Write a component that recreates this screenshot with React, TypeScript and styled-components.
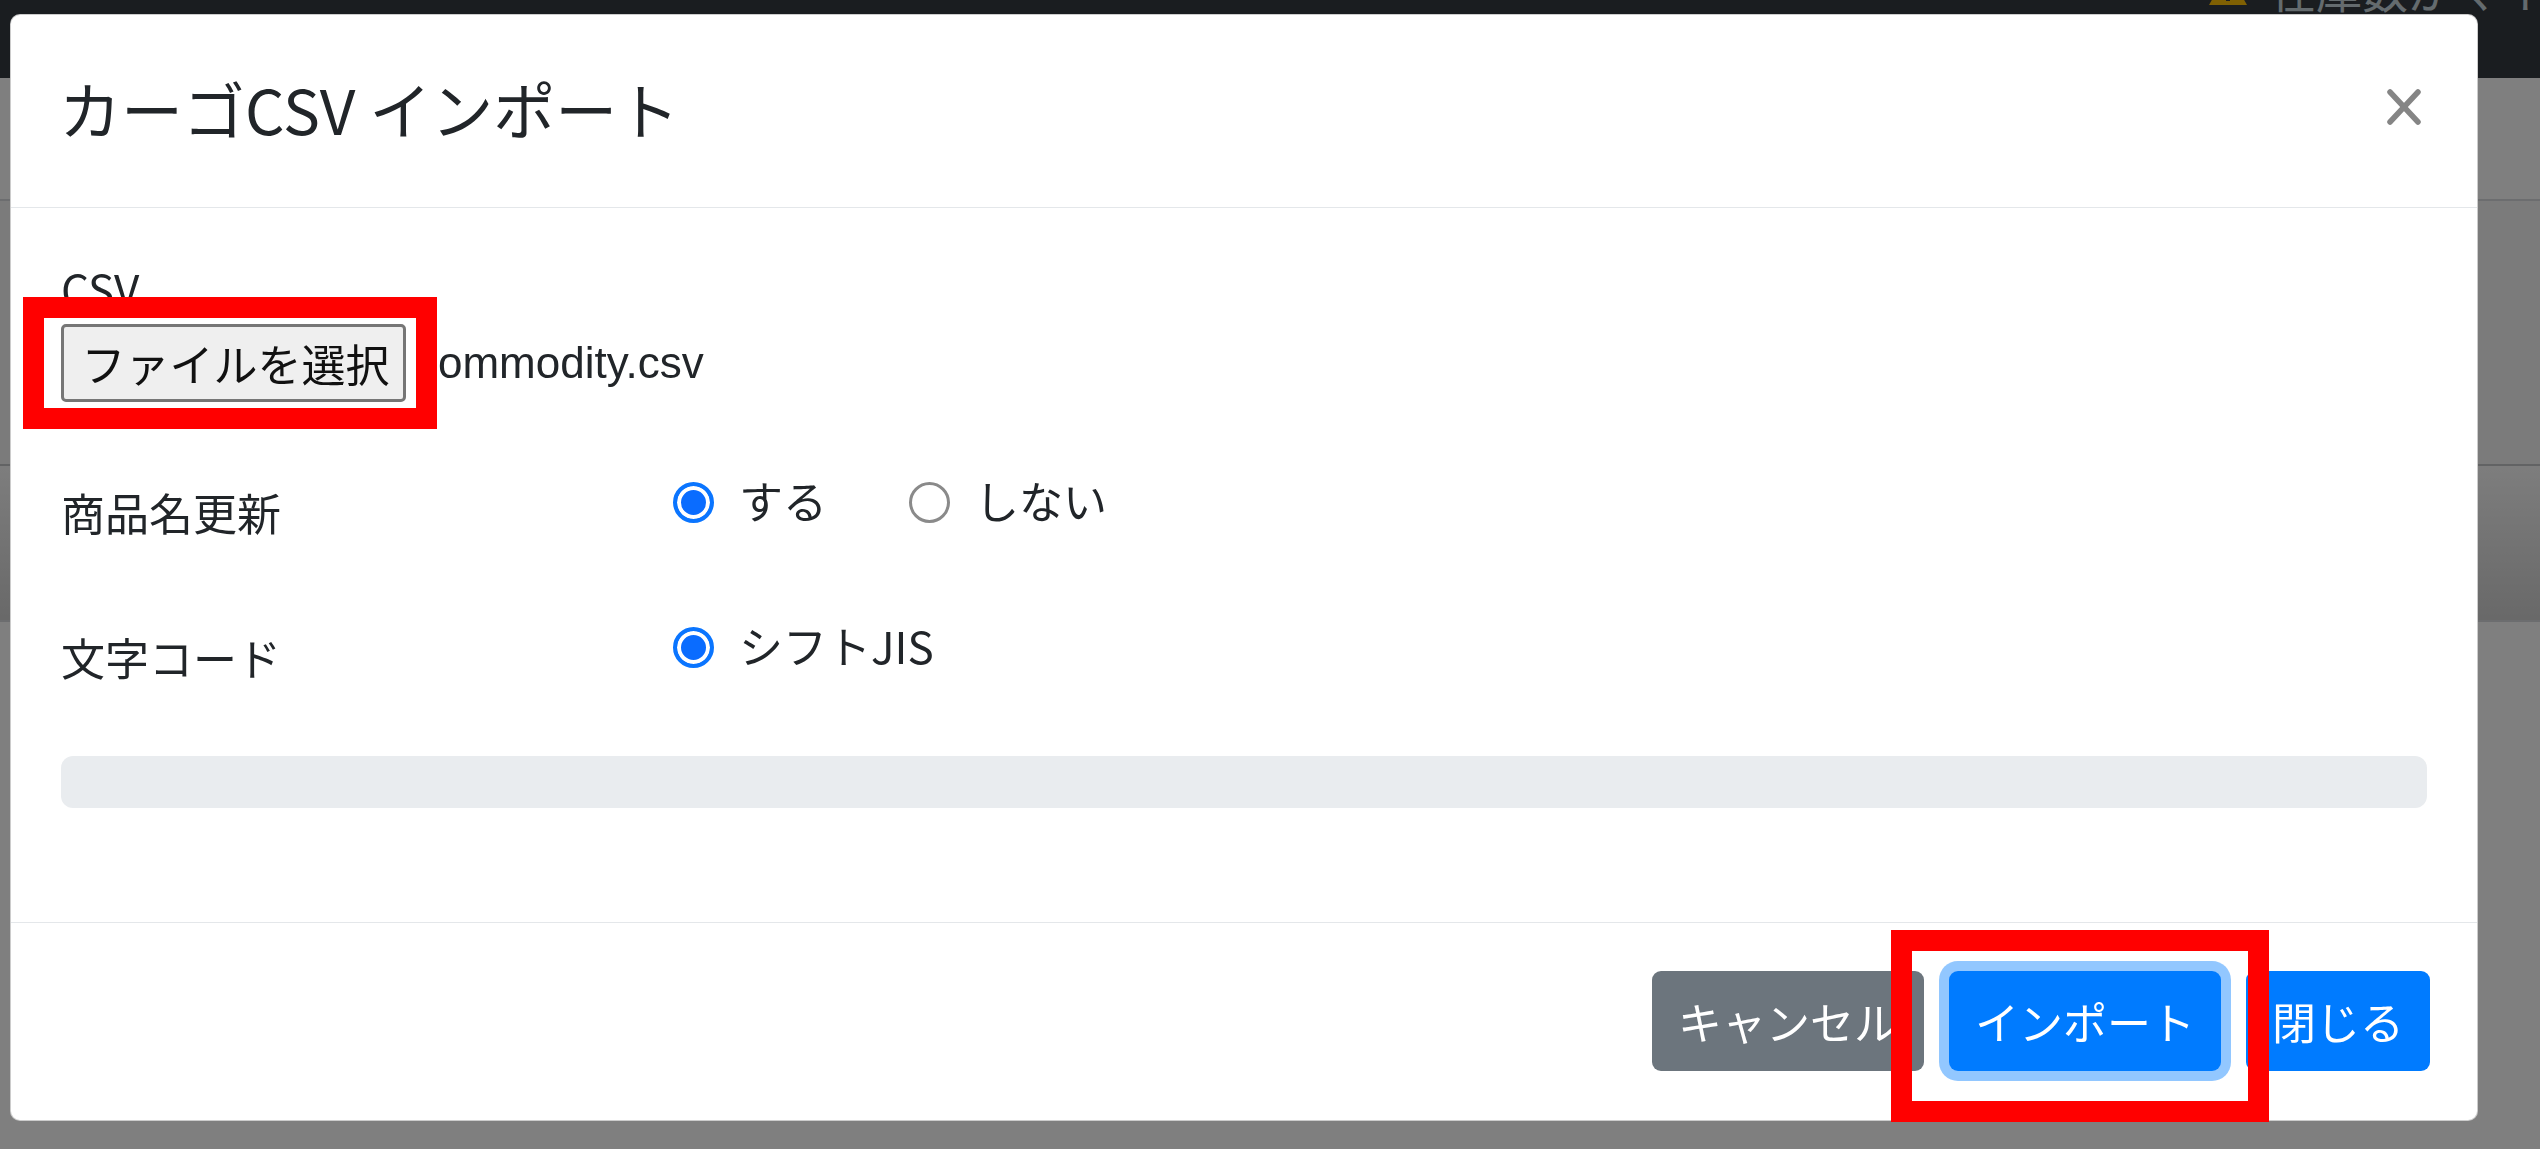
import React from "react";
import styled, { createGlobalStyle } from "styled-components";

const GlobalStyle = createGlobalStyle`
    * {
        box-sizing: border-box;
    }
    body {
        margin: 0;
        overflow: hidden;
        font-family: "Noto Sans CJK JP", "Noto Sans", sans-serif;
        color: #212529;
    }
`;

const Page = styled.div`
    height: 1149px;
    background: #fff;
    overflow: hidden;
`;

const Navbar = styled.div`
    height: 78px;
    background: #343a40;
    display: flex;
    align-items: flex-start;
    padding-left: 2208px;
    overflow: hidden;
    white-space: nowrap;
`;

const NavWarning = styled.div`
    display: flex;
    align-items: center;
    gap: 22px;
    margin-top: -37px;
    height: 50px;
    color: #c9d6dc;
    font-size: 46px;
    line-height: 50px;
`;

const Band = styled.div<{ $height: number; $bg: string; $line?: string }>`
    height: ${(p) => p.$height}px;
    background: ${(p) => p.$bg};
    border-top: ${(p) => (p.$line ? `2px solid ${p.$line}` : "none")};
`;

const Backdrop = styled.div`
    position: fixed;
    inset: 0;
    background: rgba(0, 0, 0, 0.5);
`;

const ModalLayer = styled.div`
    position: fixed;
    inset: 0;
    padding: 14px 0 0 10px;
`;

const Modal = styled.div`
    position: relative;
    width: 2468px;
    background: #fff;
    border: 1px solid rgba(0, 0, 0, 0.2);
    border-radius: 10px;
`;

const Header = styled.div`
    display: flex;
    align-items: center;
    padding: 47px 56px 52px 48px;
    border-bottom: 1px solid #e4e7ea;
`;

const Title = styled.h5`
    margin: 0;
    font-size: 62px;
    font-weight: 400;
    line-height: 93px;
    color: #212529;
`;

const CloseButton = styled.button`
    margin-left: auto;
    margin-top: -4px;
    padding: 0;
    border: 0;
    background: transparent;
    display: flex;
    color: #858585;
`;

const Body = styled.div`
    padding: 47px 50px 114px 50px;
`;

const FieldLabel = styled.div`
    font-size: 44px;
    line-height: 66px;
    margin-bottom: 3px;
`;

const FileRow = styled.div`
    display: flex;
    align-items: center;
    height: 78px;
    margin-bottom: 67px;
`;

const FileButton = styled.button`
    width: 345px;
    height: 78px;
    padding: 0 0 0 4px;
    background: #efefef;
    border: 3px solid #767676;
    border-radius: 5px;
    font-family: inherit;
    font-size: 44px;
    color: #111;
`;

const FileName = styled.span`
    margin-left: 10px;
    font-family: "Liberation Sans", "Noto Sans CJK JP", sans-serif;
    font-size: 44px;
    color: #212529;
`;

const FormRow = styled.div<{ $gap: number }>`
    display: grid;
    grid-template-columns: 612px 1fr;
    margin-bottom: ${(p) => p.$gap}px;
`;

const RowLabel = styled.div`
    padding-top: 10px;
    font-size: 44px;
    line-height: 66px;
`;

const Options = styled.div`
    display: flex;
    align-items: center;
    height: 66px;
`;

const Option = styled.label`
    display: flex;
    align-items: center;
    gap: 25px;
    margin-right: 82px;
    font-size: 44px;
    line-height: 60px;
    padding-bottom: 4px;
`;

const Radio = styled.input`
    appearance: none;
    margin: 4px 0 0 0;
    width: 41px;
    height: 41px;
    border-radius: 50%;
    border: 3px solid #8a8a8a;
    background: #fff;

    &:checked {
        border: 4px solid #0a75ff;
        background: #0a6cff;
        box-shadow: inset 0 0 0 4px #fff;
    }
`;

const Progress = styled.div`
    height: 52px;
    border-radius: 12px;
    background: #e9ecef;
`;

const Footer = styled.div`
    display: flex;
    justify-content: flex-end;
    align-items: center;
    gap: 25px;
    padding: 48px 47px 49px;
    border-top: 1px solid #e4e7ea;
`;

const Button = styled.button<{ $variant: "primary" | "secondary"; $focused?: boolean }>`
    height: 100px;
    padding: 0 26px;
    border: 0;
    border-radius: 9px;
    font-family: inherit;
    font-size: 44px;
    color: #fff;
    background: ${(p) => (p.$variant === "primary" ? "#007bff" : "#6c757d")};
    box-shadow: ${(p) => (p.$focused ? "0 0 0 10px rgba(38, 143, 255, 0.5)" : "none")};
`;

const Highlight = styled.div<{ $left: number; $top: number; $w: number; $h: number }>`
    position: absolute;
    left: ${(p) => p.$left}px;
    top: ${(p) => p.$top}px;
    width: ${(p) => p.$w}px;
    height: ${(p) => p.$h}px;
    border: 21px solid #ff0000;
    pointer-events: none;
`;

const WarningIcon = () => (
    <svg width="40" height="36" viewBox="0 0 40 36">
        <path d="M20 1 L39 35 L1 35 Z" fill="#ffc107" />
        <rect x="18" y="11" width="4" height="13" fill="#343a40" />
        <rect x="18" y="27" width="4" height="4" fill="#343a40" />
    </svg>
);

const CloseIcon = () => (
    <svg width="34" height="36" viewBox="0 0 34 36">
        <line x1="3" y1="3" x2="31" y2="33" stroke="currentColor" strokeWidth="5.5" strokeLinecap="round" />
        <line x1="31" y1="3" x2="3" y2="33" stroke="currentColor" strokeWidth="5.5" strokeLinecap="round" />
    </svg>
);

const App: React.FC = () => {
    return (
        <>
            <GlobalStyle />
            <Page>
                <Navbar>
                    <NavWarning>
                        <WarningIcon />
                        <span>在庫数がマイナスの商品があります</span>
                    </NavWarning>
                </Navbar>
                <Band $height={121} $bg="#ffffff" />
                <Band $height={265} $bg="#f6f6f7" $line="#d8dbde" />
                <Band $height={156} $bg="linear-gradient(#fbfbfb, #d2d2d2)" $line="#c4c6c8" />
                <Band $height={530} $bg="#ffffff" $line="#d8dbde" />
            </Page>
            <Backdrop />
            <ModalLayer>
                <Modal>
                    <Header>
                        <Title>カーゴCSV インポート</Title>
                        <CloseButton type="button" aria-label="Close">
                            <CloseIcon />
                        </CloseButton>
                    </Header>
                    <Body>
                        <FieldLabel>CSV</FieldLabel>
                        <FileRow>
                            <FileButton type="button">ファイルを選択</FileButton>
                            <FileName>commodity.csv</FileName>
                        </FileRow>
                        <FormRow $gap={69}>
                            <RowLabel>商品名更新</RowLabel>
                            <Options>
                                <Option>
                                    <Radio type="radio" name="update" defaultChecked />
                                    する
                                </Option>
                                <Option>
                                    <Radio type="radio" name="update" />
                                    しない
                                </Option>
                            </Options>
                        </FormRow>
                        <FormRow $gap={66}>
                            <RowLabel>文字コード</RowLabel>
                            <Options>
                                <Option>
                                    <Radio type="radio" name="encoding" defaultChecked />
                                    シフトJIS
                                </Option>
                            </Options>
                        </FormRow>
                        <Progress />
                    </Body>
                    <Footer>
                        <Button type="button" $variant="secondary">キャンセル</Button>
                        <Button type="button" $variant="primary" $focused>インポート</Button>
                        <Button type="button" $variant="primary">閉じる</Button>
                    </Footer>
                    <Highlight $left={12} $top={282} $w={414} $h={132} />
                    <Highlight $left={1880} $top={915} $w={378} $h={192} />
                </Modal>
            </ModalLayer>
        </>
    );
};

export default App;
